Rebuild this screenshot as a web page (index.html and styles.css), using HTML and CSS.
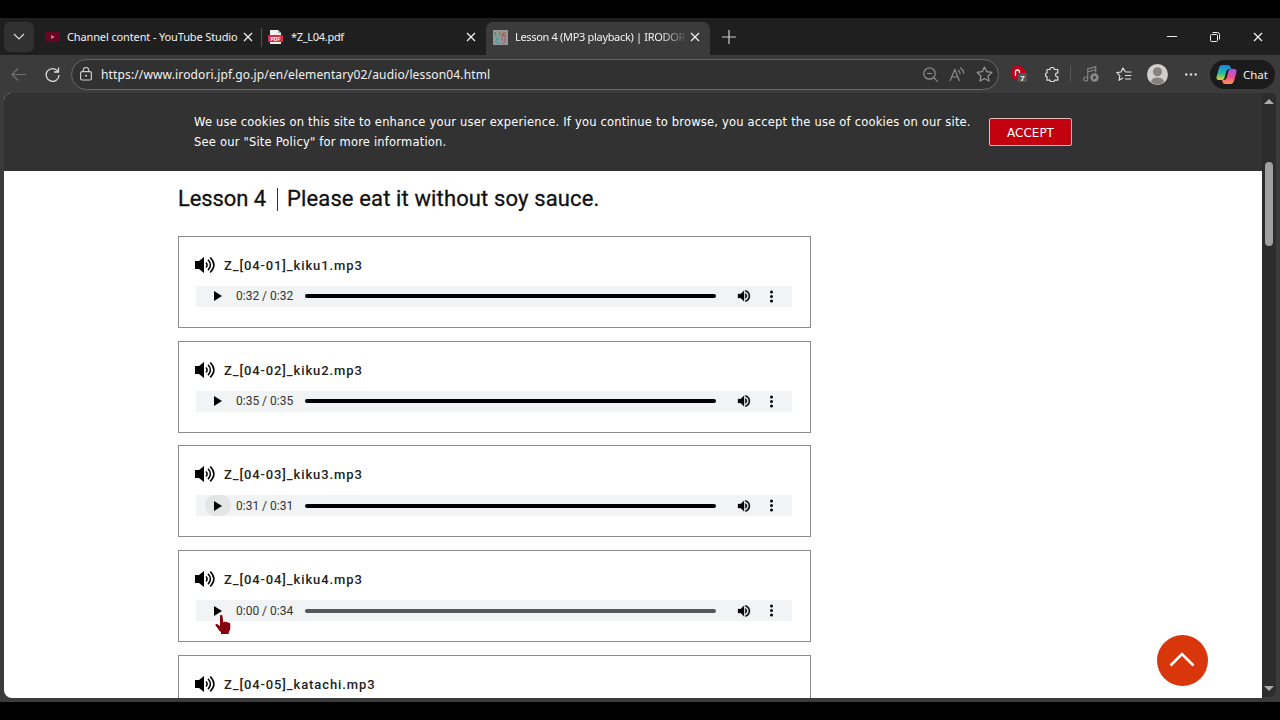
FILE: index.html
```
<!DOCTYPE html>
<html lang="en">
<head>
<meta charset="utf-8">
<title>Lesson 4 (MP3 playback) | IRODORI</title>
<link rel="stylesheet" href="styles.css">
</head>
<body>
<svg width="0" height="0" class="defs">
  <symbol id="x" viewBox="0 0 10 10"><path d="M1 1l8 8M9 1L1 9" fill="none" stroke="currentColor" stroke-width="1.2"/></symbol>
  <symbol id="sound" viewBox="0 0 20 18"><path d="M0 5h4l5-4v16l-5-4H0z" fill="#000"/><path d="M11 6.500q2.200 2.500 0 5M13 3.800q4.800 5.200 0 10.400M15.200 1.500q7.400 7.500 0 15" fill="none" stroke="#000" stroke-width="1.500"/></symbol>
  <symbol id="vol" viewBox="0 0 24 24"><path d="M3 9v6h4l5 5V4L7 9H3zm13.500 3A4.500 4.500 0 0 0 14 7.970v8.050A4.500 4.500 0 0 0 16.500 12zM14 3.230v2.060a7 7 0 0 1 0 13.420v2.060a9 9 0 0 0 0-17.540z" stroke="#000" stroke-width=".4"/></symbol>
  <symbol id="play" viewBox="0 0 8 10"><path d="M0 0l8 5-8 5z"/></symbol>
</svg>
<div class="window">
  <header class="tabs">
    <button class="tab-menu"><svg width="12" height="7" viewBox="0 0 12 7"><path d="M1 1l5 5 5-5" fill="none" stroke="#ddd" stroke-width="1.200"/></svg></button>
    <div class="tab tab-youtube">
      <svg class="fav" width="16" height="12" viewBox="0 0 16 12"><rect y="1" width="15" height="10" rx="2" fill="#680522"/><path d="M6 4l4 2-4 2z" fill="#c9788b"/></svg>
      <span class="tab-title">Channel content - YouTube Studio</span>
      <svg class="close" width="10" height="10"><use href="#x"/></svg>
    </div>
    <div class="tab tab-pdf">
      <svg class="fav" width="15" height="15" viewBox="0 0 15 15"><path d="M2 0h8l3 3v11H2z" fill="#f4eeee"/><path d="M10 0v3h3z" fill="#aaa"/><rect y="5" width="15" height="7" rx="1" fill="#d92c49"/><text x="7.500" y="10.500" class="pdf-mark" text-anchor="middle">PDF</text></svg>
      <span class="tab-title">*Z_L04.pdf</span>
      <svg class="close" width="10" height="10"><use href="#x"/></svg>
    </div>
    <div class="tab tab-active">
      <svg class="fav" width="15" height="15" viewBox="0 0 15 15"><rect width="15" height="15" fill="#929895"/><g fill="none" stroke-width="1.200"><path d="M2 2q0 3 1.500 4M6 2q1 1 .5 3" stroke="#4d8b63"/><path d="M9 3h3L9 6q4-1 4 1" stroke="#b65353"/><path d="M3 8l2 2M6 8q-5 2-2 5h3" stroke="#4e9aa0"/><path d="M9 8v3M12 8q1 4-2 6" stroke="#9d5d7d"/></g></svg>
      <span class="tab-title">Lesson 4 (MP3 playback) | IRODOR</span>
      <svg class="close" width="10" height="10"><use href="#x"/></svg>
    </div>
    <svg class="new-tab" width="14" height="14" viewBox="0 0 14 14"><path d="M7 0v14M0 7h14" stroke="#ccc" stroke-width="1.200"/></svg>
    <div class="window-buttons">
      <svg width="10" height="10" viewBox="0 0 10 10"><path d="M0 4.500h10" stroke="#eee"/></svg>
      <svg width="10" height="10" viewBox="0 0 10 10"><g fill="none" stroke="#eee"><rect x=".5" y="2.500" width="7" height="7" rx="1"/><path d="M2.500 .5h5q2 0 2 2v5"/></g></svg>
      <svg width="10" height="10"><use href="#x"/></svg>
    </div>
  </header>
  <nav class="toolbar">
    <svg class="back" width="15" height="13" viewBox="0 0 15 13"><path d="M7 .5l-6 6 6 6M1 6.500h14" fill="none" stroke="#707070" stroke-width="1.200"/></svg>
    <svg class="reload" width="15" height="15" viewBox="0 0 15 15"><path d="M13 4.500A6.400 6.400 0 1 0 14 8M13.500 .5v4.500H9" fill="none" stroke="#ddd" stroke-width="1.300"/></svg>
    <div class="address">
      <svg width="12" height="14" viewBox="0 0 12 14"><g fill="none" stroke="#ccc" stroke-width="1.200"><rect x=".6" y="4.600" width="10.800" height="8.400" rx="1.500"/><path d="M3.300 4.500V3.200a2.700 2.700 0 0 1 5.400 0v1.300"/></g><circle cx="6" cy="8.800" r="1" fill="#ddd"/></svg>
      <span class="url">https://www.irodori.jpf.go.jp/en/elementary02/audio/lesson04.html</span>
      <div class="address-tools">
        <svg width="15" height="15" viewBox="0 0 15 15"><g fill="none" stroke="#8d8d8d" stroke-width="1.200"><circle cx="6.500" cy="6.500" r="5.700"/><path d="M4 6.500h5M10.700 10.700l4 4"/></g></svg>
        <svg width="16" height="15" viewBox="0 0 16 15"><g fill="none" stroke="#8d8d8d" stroke-width="1.200"><path d="M1 14L5.800 2.500 10.500 14M2.700 10h6.200M9 3q2 1.500 2.200 4M11 .8q3.600 2.200 3.800 6"/></g></svg>
        <svg width="17" height="16" viewBox="0 0 17 16"><path d="M8.500 1l2.200 4.700 5.200.7-3.800 3.600.9 5.100-4.500-2.500L4 15.100l.9-5.100L1.100 6.400l5.200-.7z" fill="none" stroke="#999" stroke-width="1.200" stroke-linejoin="round"/></svg>
      </div>
    </div>
    <div class="extensions">
      <svg class="adblock" width="16" height="16" viewBox="0 0 16 16"><path d="M4 0h6l4 4v6l-4 4H4L0 10V4z" fill="#c1001c"/><path d="M4.500 10V6q0-2 2-2t2 2v1" fill="none" stroke="#fff" stroke-width="1.300"/><rect x="7" y="7" width="9" height="9" rx="1" fill="#555"/><text x="11.500" y="14.500" class="count" text-anchor="middle">7</text></svg>
      <svg class="puzzle" width="15" height="15" viewBox="0 0 15 15"><path d="M2 2.500h3q.2-2 2.200-2t2.200 2h3.400v3.400q-2.200-.3-2.200 1.900t2.200 2v3.400H9.500q0 1.600-2.200 1.600T5 13.200H2V9.700Q.5 9.500.5 7.700T2 5.800z" fill="none" stroke="#ddd" stroke-width="1.200" stroke-linejoin="round"/></svg>
      <i class="tool-divider"></i>
      <svg class="music" width="16" height="16" viewBox="0 0 16 16"><g fill="none" stroke="#858585" stroke-width="1.200"><circle cx="2.700" cy="13" r="2"/><path d="M4.700 13V3l8-2.400v6M4.700 6l8-2.300"/></g><circle cx="11.500" cy="11.500" r="4.200" fill="#8b8b8b"/><path d="M10.300 9.300l3.300 2.200-3.300 2.200z" fill="#333"/></svg>
      <svg class="favorites" width="16" height="15" viewBox="0 0 16 15"><path d="M9.500 5L7 1 5 5 .8 5.600l3 3-.7 4.700L7 11M9.500 5h6M9 8.500h6.500M9 12h6" fill="none" stroke="#ddd" stroke-width="1.200" stroke-linejoin="round"/></svg>
      <svg class="avatar" width="21" height="21" viewBox="0 0 21 21"><defs><clipPath id="face"><circle cx="10.500" cy="10.500" r="10"/></clipPath></defs><circle cx="10.500" cy="10.500" r="10.500" fill="#d0cfcd"/><g clip-path="url(#face)" fill="#85827f"><circle cx="10.500" cy="7.800" r="4.500"/><ellipse cx="10.500" cy="18" rx="6.500" ry="4.500"/></g></svg>
      <svg class="dots" width="12" height="3" viewBox="0 0 12 3"><g fill="#ddd"><circle cx="1.300" cy="1.500" r="1.200"/><circle cx="6" cy="1.500" r="1.200"/><circle cx="10.700" cy="1.500" r="1.200"/></g></svg>
      <button class="chat"><svg width="21" height="19" viewBox="0 0 21 19"><defs><linearGradient id="ca" x2="0" y2="1"><stop stop-color="#1681ef"/><stop offset=".55" stop-color="#25bf99"/><stop offset="1" stop-color="#edd028"/></linearGradient><linearGradient id="cb" x2="0" y2="1"><stop stop-color="#a454f3"/><stop offset=".55" stop-color="#ee528d"/><stop offset="1" stop-color="#ff954f"/></linearGradient></defs><path d="M6 0h6q2 0 2.500 2l.6 2H13q-2 0-2.600 2L8.500 13q-.6 2-2.500 2H3q-3 0-2.500-3L3 3Q3.800 0 6 0z" fill="url(#ca)"/><path d="M15 19H9q-2 0-2.500-2L6 15h2q2 0 2.600-2l1.900-7q.6-2 2.500-2h3q3 0 2.500 3L18 16q-.8 3-3 3z" fill="url(#cb)"/></svg><span>Chat</span></button>
    </div>
  </nav>
  <div class="viewport">
    <main class="page">
      <section class="cookie">
        <p>We use cookies on this site to enhance your user experience. If you continue to browse, you accept the use of cookies on our site.<br>See our "Site Policy" for more information.</p>
        <button class="accept">ACCEPT</button>
      </section>
      <h1><span class="lesson">Lesson 4</span><i></i><span class="phrase">Please eat it without soy sauce.</span></h1>
      <div class="tracks">
        <article class="card"><h2><svg width="20" height="18"><use href="#sound"/></svg><span>Z_[04-01]_kiku1.mp3</span></h2><div class="player"><span class="play"><svg width="8" height="10"><use href="#play"/></svg></span><span class="time">0:32 / 0:32</span><i class="track"></i><svg class="vol" width="16" height="16"><use href="#vol"/></svg><span class="more"></span></div></article>
        <article class="card"><h2><svg width="20" height="18"><use href="#sound"/></svg><span>Z_[04-02]_kiku2.mp3</span></h2><div class="player"><span class="play"><svg width="8" height="10"><use href="#play"/></svg></span><span class="time">0:35 / 0:35</span><i class="track"></i><svg class="vol" width="16" height="16"><use href="#vol"/></svg><span class="more"></span></div></article>
        <article class="card"><h2><svg width="20" height="18"><use href="#sound"/></svg><span>Z_[04-03]_kiku3.mp3</span></h2><div class="player"><span class="play focus"><svg width="8" height="10"><use href="#play"/></svg></span><span class="time">0:31 / 0:31</span><i class="track"></i><svg class="vol" width="16" height="16"><use href="#vol"/></svg><span class="more"></span></div></article>
        <article class="card"><h2><svg width="20" height="18"><use href="#sound"/></svg><span>Z_[04-04]_kiku4.mp3</span></h2><div class="player"><span class="play"><svg width="8" height="10"><use href="#play"/></svg></span><span class="time">0:00 / 0:34</span><i class="track idle"></i><svg class="vol" width="16" height="16"><use href="#vol"/></svg><span class="more"></span></div></article>
        <article class="card"><h2><svg width="20" height="18"><use href="#sound"/></svg><span>Z_[04-05]_katachi.mp3</span></h2></article>
      </div>
    </main>
    <aside class="scrollbar"><i class="up"></i><i class="thumb"></i><i class="down"></i></aside>
  </div>
  <button class="to-top"><svg width="26" height="16" viewBox="0 0 26 16"><path d="M1.500 14.500L13 3l11.500 11.500" fill="none" stroke="#fff" stroke-width="2.600"/></svg></button>
  <svg class="cursor" width="16" height="20" viewBox="0 0 16 20"><path d="M5 1q0-1 1.200-1t1.300 1l.7 6.500q.5-1.800 2.300-.5 1.500-1 2.300.7 2.400-.9 2.500 1.600v4q0 2.500-1.500 3.700V19H6v-2q-2-1-3.500-4L.5 10.500q-.5-2 1.500-1.500L5 11z" fill="#86000e"/></svg>
</div>
</body>
</html>
```

FILE: styles.css
```
* { box-sizing: border-box; }
body { margin: 0; width: 1280px; height: 720px; background: #000; padding: 18px 0; overflow: hidden; }
.defs { position: absolute; }
button { border: 0; padding: 0; font: inherit; color: inherit; }
svg { display: block; flex: none; }
.window { position: relative; height: 684px; background: #3b3b3b; font-family: "Noto Sans", "Open Sans", sans-serif; color: #f2f2f2; overflow: hidden; }
.tabs { height: 37px; background: #1f1f1f; display: flex; align-items: center; padding-left: 4px; }
.tab-menu { width: 30px; height: 30px; border-radius: 6px; background: #313131; display: flex; align-items: center; justify-content: center; }
.tab { height: 33px; margin-top: 4px; padding-bottom: 3px; display: flex; align-items: center; flex: none; }
.tab-title { font-size: 11px; line-height: 18px; letter-spacing: -.13px; white-space: nowrap; }
.tab-youtube { width: 229px; padding-left: 11px; }
.tab-youtube .tab-title { margin-left: 6px; width: 176px; }
.tab-pdf { width: 223px; padding-left: 5px; }
.tab-pdf::before { content: ""; width: 1px; height: 19px; background: #505050; margin: 0 6px 0 -7px; }
.tab-pdf .tab-title { margin-left: 8px; width: 175px; letter-spacing: -.3px; }
.tab-active { width: 224px; background: #3b3b3b; border-radius: 7px 7px 0 0; padding-left: 7px; }
.tab-active .tab-title { margin-left: 7px; width: 173px; margin-right: 2px; letter-spacing: -.32px; mask-image: linear-gradient(90deg, #000 84%, transparent 100%); }
.pdf-mark { font: bold 5px "Liberation Sans", sans-serif; fill: #fff; }
.new-tab { margin-left: 12px; }
.window-buttons { display: flex; margin-left: auto; gap: 33px; padding-right: 17px; }
.toolbar { height: 38px; display: flex; align-items: center; padding-left: 11px; }
.reload { margin-left: 19px; }
.address { width: 928px; height: 31px; margin-left: 11px; border: 1px solid #676767; border-radius: 16px; background: #313131; display: flex; align-items: center; padding: 0 5px 0 8px; }
.url { font-size: 12px; letter-spacing: .14px; margin-left: 9px; white-space: nowrap; }
.address-tools { display: flex; margin-left: auto; align-items: center; gap: 11px; }
.extensions { display: flex; align-items: center; flex: 1; padding-left: 12px; }
.count { font: bold 8px "Liberation Sans", sans-serif; fill: #fff; }
.puzzle { margin-left: 18px; }
.tool-divider { width: 1px; height: 16px; background: #575757; margin-left: 10px; }
.music { margin-left: 12px; }
.favorites { margin-left: 17px; }
.avatar { margin-left: 15px; }
.dots { margin-left: 17px; }
.chat { width: 65px; height: 29px; border-radius: 15px; background: #1b1b1b; margin-left: 13px; display: flex; align-items: center; gap: 6px; padding-left: 6px; font-size: 11.5px; }
.viewport { height: 605px; display: flex; margin-left: 4px; }
.page { width: 1258px; height: 605px; background: #fff; overflow: hidden; border-radius: 7px 0 0 8px; color: #222; }
.cookie { height: 78px; background: #323232; color: #fff; display: flex; padding: 19px 0 0 190px; align-items: flex-start; }
.cookie p { margin: 0; width: 781px; font: 11.500px/20px "DejaVu Sans", sans-serif; letter-spacing: .2px; white-space: nowrap; }
.accept { width: 83px; height: 28px; margin: 6px 0 0 14px; background: #c2000e; border: 1px solid #e7b9bd; border-radius: 2px; font: 12px "DejaVu Sans", sans-serif; padding-top: 1px; }
h1 { margin: 14px 0 0 174px; height: 28px; display: flex; align-items: center; font: 400 22px/28px Roboto, sans-serif; letter-spacing: .13px; color: #111; -webkit-text-stroke: .3px #111; white-space: nowrap; }
h1 i { width: 1px; height: 23px; background: #333; margin: 0 9px 0 11px; }
h1 .lesson { width: 88px; letter-spacing: -.1px; }
.tracks { margin: 23px 0 0 174px; width: 632.500px; display: flex; flex-direction: column; gap: 12.700px; }
.card { height: 92px; border: 1px solid #8b8b8b; padding: 18px 0 0 17px; flex: none; }
h2 { margin: 0 0 0 -1px; height: 20px; display: flex; align-items: center; gap: 9px; font: 500 13px/20px Roboto, sans-serif; letter-spacing: .9px; color: #222; }
h2 span { margin-top: 2px; }
.player { width: 596px; height: 21px; margin-top: 11px; background: #f1f3f4; display: flex; align-items: center; }
.card:first-child .player { margin-top: 10.500px; }
.play { width: 26px; height: 21px; margin-left: 9px; display: flex; align-items: center; justify-content: center; border-radius: 10px; }
.focus { background: #e4e6e6; }
.time { width: 70px; padding-left: 5px; font: 12px Roboto, sans-serif; color: #333; white-space: nowrap; }
.track { width: 411px; height: 4px; margin-left: 4px; border-radius: 2px; background: #000; }
.idle { background: #575757; }
.vol { margin-left: 20px; }
.more { width: 3px; height: 3px; border-radius: 50%; background: #000; margin-left: 17.500px; box-shadow: 0 -4.500px #000, 0 4.500px #000; }
.scrollbar { width: 14px; margin-bottom: 1px; background: #2c2c2c; border-radius: 0 5px 7px 0; display: flex; flex-direction: column; align-items: center; padding: 6px 0; }
.up { border: 5px solid transparent; border-top: 0; border-bottom-color: #aaa; }
.thumb { width: 8px; height: 84px; margin-top: 58px; background: #a0a0a0; border-radius: 4px; }
.down { border: 5px solid transparent; border-bottom: 0; border-top-color: #aaa; margin-top: auto; }
.to-top { position: absolute; left: 1157px; top: 617px; width: 51px; height: 51px; border-radius: 50%; background: #d9360b; display: flex; align-items: center; justify-content: center; padding: 0 1px 3px 0; }
.cursor { position: absolute; left: 215px; top: 597px; }
```
